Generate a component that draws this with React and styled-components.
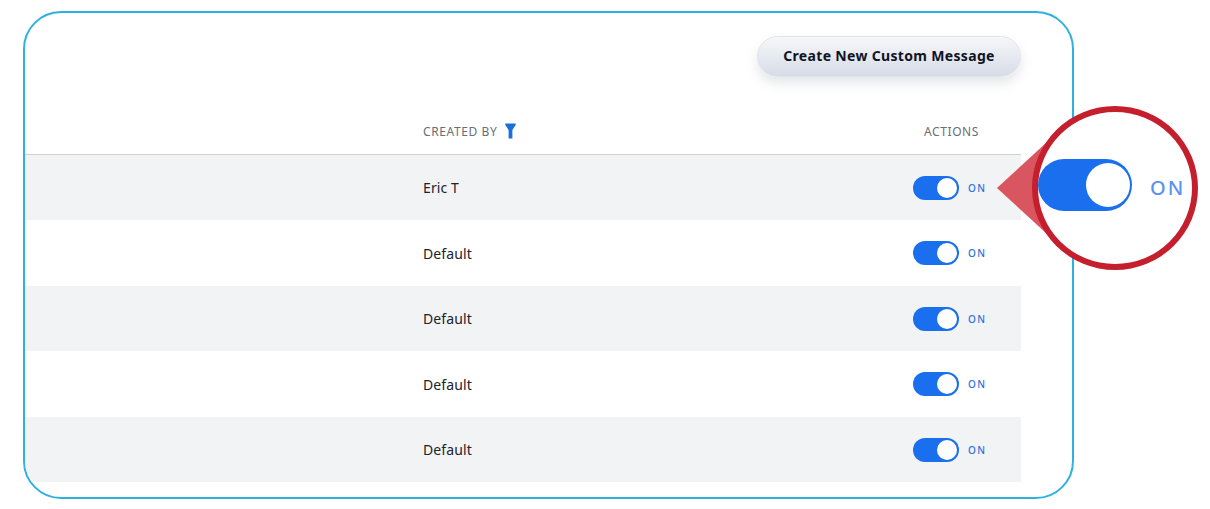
import React from "react";
import styled, { createGlobalStyle } from "styled-components";

const Global = createGlobalStyle`
  html, body { margin: 0; padding: 0; background: #fff; }
  body { font-family: "Noto Sans", "Open Sans", sans-serif; width: 1210px; height: 509px; overflow: hidden; }
`;
const Page = styled.div`
  position: relative;
  width: 1210px;
  height: 509px;
  padding: 11px 0 0 23px;
  box-sizing: border-box;
`;
const Frame = styled.div`
  width: 1051px;
  height: 488px;
  box-sizing: border-box;
  border: 2px solid #2eb1e2;
  border-radius: 38px;
  padding: 23px 51px 0 0;
  overflow: hidden;
  background: #fff;
`;
const Toolbar = styled.div`
  display: flex;
  justify-content: flex-end;
  height: 41px;
`;
const PrimaryButton = styled.button`
  width: 264px;
  height: 41px;
  border: 1px solid #e2e4e9;
  border-radius: 21px;
  background: linear-gradient(180deg, #f6f7f9 0%, #d6dce7 100%);
  box-shadow: 0 6px 12px rgba(120, 130, 150, 0.2);
  font: 700 14px "Noto Sans", sans-serif;
  letter-spacing: 0.33px;
  color: #10141f;
  padding: 0 0 3px;
`;
const Grid = `
  display: grid;
  grid-template-columns: 398px 1fr 113px;
`;
const Header = styled.div`
  ${Grid}
  height: 78px;
  box-sizing: border-box;
  padding: 46px 0 0;
  border-bottom: 1px solid #cfd0d2;
`;
const HeadCell = styled.div`
  grid-column: ${(p) => p.$col};
  display: flex;
  align-items: flex-start;
  gap: 8px;
  font-size: 12px;
  line-height: 17px;
  letter-spacing: 0.6px;
  color: #6a6e76;
  text-transform: uppercase;
`;
const ActionsHead = styled(HeadCell)`
  padding-left: 16px;
`;
const Row = styled.div`
  ${Grid}
  height: ${(p) => p.$h}px;
  align-items: center;
  background: ${(p) => (p.$shade ? "#f2f3f5" : "#fff")};
`;
const Author = styled.div`
  grid-column: 2;
  font-size: 14px;
  letter-spacing: 0.1px;
  color: #20232b;
`;
const ToggleWrap = styled.div`
  grid-column: 3;
  display: flex;
  align-items: center;
  gap: 9px;
  padding-left: 5px;
`;
const Track = styled.div`
  width: 46px;
  height: 24px;
  box-sizing: border-box;
  border-radius: 12px;
  background: #1a6fee;
  display: flex;
  justify-content: flex-end;
  padding: 2px;
`;
const Knob = styled.div`
  width: 20px;
  height: 20px;
  border-radius: 50%;
  background: #fff;
`;
const OnLabel = styled.span`
  font-size: 10px;
  font-weight: 500;
  letter-spacing: 1.3px;
  color: #2b72e0;
`;
const Pointer = styled.svg`
  position: absolute;
  left: 990px;
  top: 130px;
`;
const Lens = styled.div`
  position: absolute;
  left: 1032px;
  top: 106px;
  width: 166px;
  height: 164px;
  box-sizing: border-box;
  border: 6px solid #c51f2e;
  border-radius: 50%;
  background: #fff;
  display: flex;
  align-items: center;
  gap: 18px;
`;
const BigTrack = styled.div`
  width: 94px;
  height: 52px;
  box-sizing: border-box;
  border-radius: 26px;
  background: #1a6fee;
  display: flex;
  justify-content: flex-end;
  align-items: center;
  padding-right: 2px;
  margin-top: -6px;
`;
const BigKnob = styled.div`
  width: 44px;
  height: 44px;
  border-radius: 50%;
  background: #fff;
`;
const BigLabel = styled.span`
  font-size: 20px;
  font-weight: 500;
  letter-spacing: 2px;
  color: #5d93ea;
  margin-top: -2px;
`;

const rows = [
  { name: "Eric T", shade: true, h: 65 },
  { name: "Default", shade: false, h: 66 },
  { name: "Default", shade: true, h: 65 },
  { name: "Default", shade: false, h: 66 },
  { name: "Default", shade: true, h: 65 },
];

const Toggle = () => (
  <ToggleWrap>
    <Track><Knob /></Track>
    <OnLabel>ON</OnLabel>
  </ToggleWrap>
);

export default function App() {
  return (
    <Page>
      <Global />
      <Frame>
        <Toolbar>
          <PrimaryButton>Create New Custom Message</PrimaryButton>
        </Toolbar>
        <Header>
          <HeadCell $col={2}>
            Created by
            <svg width="11" height="16" viewBox="0 0 11 16">
              <path d="M0.3 0.5H10.7V2L7.4 7V15.5H3.6V7L0.3 2Z" fill="#1a6fdc" />
            </svg>
          </HeadCell>
          <ActionsHead $col={3}>Actions</ActionsHead>
        </Header>
        {rows.map((r, i) => (
          <Row key={i} $shade={r.shade} $h={r.h}>
            <Author>{r.name}</Author>
            <Toggle />
          </Row>
        ))}
      </Frame>
      <Pointer width="70" height="116" viewBox="0 0 70 116">
        <path d="M7 58L57 12V104Z" fill="#d9555f" />
      </Pointer>
      <Lens>
        <BigTrack><BigKnob /></BigTrack>
        <BigLabel>ON</BigLabel>
      </Lens>
    </Page>
  );
}
